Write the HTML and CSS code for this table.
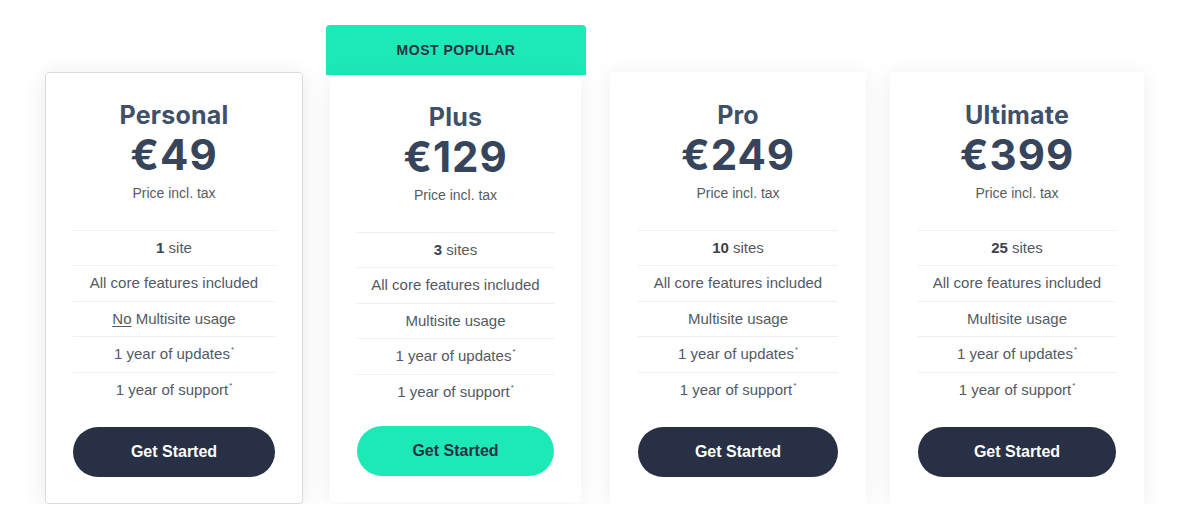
FILE: index.html
```html
<!DOCTYPE html>
<html lang="en">
<head>
<meta charset="utf-8">
<title>Pricing</title>
<link rel="stylesheet" href="styles.css">
</head>
<body>
<main class="pricing">
  <section class="plan">
    <div class="card card-active">
      <h2 class="plan-name">Personal</h2>
      <div class="plan-price">€49</div>
      <div class="plan-note">Price incl. tax</div>
      <ul class="features">
        <li><b>1</b> site</li>
        <li>All core features included</li>
        <li><u>No</u> Multisite usage</li>
        <li>1 year of updates<sup>*</sup></li>
        <li>1 year of support<sup>*</sup></li>
      </ul>
      <a class="btn" href="#">Get Started</a>
    </div>
  </section>
  <section class="plan plan-featured">
    <div class="badge">MOST POPULAR</div>
    <div class="card">
      <h2 class="plan-name">Plus</h2>
      <div class="plan-price">€129</div>
      <div class="plan-note">Price incl. tax</div>
      <ul class="features">
        <li><b>3</b> sites</li>
        <li>All core features included</li>
        <li>Multisite usage</li>
        <li>1 year of updates<sup>*</sup></li>
        <li>1 year of support<sup>*</sup></li>
      </ul>
      <a class="btn btn-accent" href="#">Get Started</a>
    </div>
  </section>
  <section class="plan">
    <div class="card">
      <h2 class="plan-name">Pro</h2>
      <div class="plan-price">€249</div>
      <div class="plan-note">Price incl. tax</div>
      <ul class="features">
        <li><b>10</b> sites</li>
        <li>All core features included</li>
        <li>Multisite usage</li>
        <li>1 year of updates<sup>*</sup></li>
        <li>1 year of support<sup>*</sup></li>
      </ul>
      <a class="btn" href="#">Get Started</a>
    </div>
  </section>
  <section class="plan">
    <div class="card">
      <h2 class="plan-name">Ultimate</h2>
      <div class="plan-price">€399</div>
      <div class="plan-note">Price incl. tax</div>
      <ul class="features">
        <li><b>25</b> sites</li>
        <li>All core features included</li>
        <li>Multisite usage</li>
        <li>1 year of updates<sup>*</sup></li>
        <li>1 year of support<sup>*</sup></li>
      </ul>
      <a class="btn" href="#">Get Started</a>
    </div>
  </section>
</main>
</body>
</html>
```
FILE: styles.css
```css
* { box-sizing: border-box; }

html, body {
  margin: 0;
  padding: 0;
  background: #ffffff;
}

body {
  font-family: "Liberation Sans", Arial, sans-serif;
  color: #4f5560;
}

.pricing {
  display: grid;
  grid-template-columns: 258px 259px 256px 254px;
  column-gap: 24px;
  align-items: start;
  padding: 25px 0 0 45px;
}

.plan {
  display: flex;
  flex-direction: column;
  padding-top: 47px;
}

.plan-featured {
  padding-top: 0;
}

.badge {
  height: 50px;
  background: #1de9b6;
  border-radius: 4px 4px 0 0;
  display: flex;
  align-items: center;
  justify-content: center;
  font-weight: 700;
  font-size: 14px;
  letter-spacing: 0.5px;
  color: #2a3145;
  margin-left: -1px;
}

.card {
  background: #fff;
  border: 1px solid transparent;
  border-radius: 4px;
  box-shadow: 0 2px 22px rgba(20, 25, 40, 0.07);
  padding: 27px 27px 26px;
  display: flex;
  flex-direction: column;
  align-items: stretch;
  text-align: center;
}

.card-active {
  border-color: #d9dbe1;
  box-shadow: 0 3px 24px rgba(20, 25, 40, 0.09);
}

.plan-featured .card {
  margin: 0 5px 0 3px;
  border-radius: 0 0 4px 4px;
  padding: 26px 26px 25px;
}

.plan-name {
  margin: 0;
  font-family: "Inter", "Lato", sans-serif;
  font-weight: 700;
  font-size: 25px;
  line-height: 30px;
  letter-spacing: 0.2px;
  color: #3f5069;
}

.plan-price {
  font-family: "Inter", "Lato", sans-serif;
  font-weight: 700;
  font-size: 42px;
  line-height: 50px;
  letter-spacing: 1px;
  color: #36455c;
}

.plan-note {
  margin-top: 3px;
  font-size: 14px;
  line-height: 20px;
  color: #555b66;
}

.features {
  list-style: none;
  margin: 27px 0 0;
  padding: 0;
}

.features li {
  border-top: 1px solid #eeeff2;
  font-size: 15px;
  line-height: 34.4px;
  color: #535964;
}

.features b {
  color: #3b4250;
}

.features u {
  text-decoration-thickness: 1px;
  text-underline-offset: 2px;
}

.features sup {
  font-size: 8px;
  line-height: 0;
  vertical-align: 7px;
  margin-left: 1px;
}

.btn {
  margin-top: 20px;
  height: 50px;
  border-radius: 25px;
  background: #283045;
  color: #fff;
  font-weight: 700;
  font-size: 16px;
  display: flex;
  align-items: center;
  justify-content: center;
  text-decoration: none;
}

.btn-accent {
  background: #1de9b6;
  color: #2a3145;
  margin-top: 17px;
}
```
